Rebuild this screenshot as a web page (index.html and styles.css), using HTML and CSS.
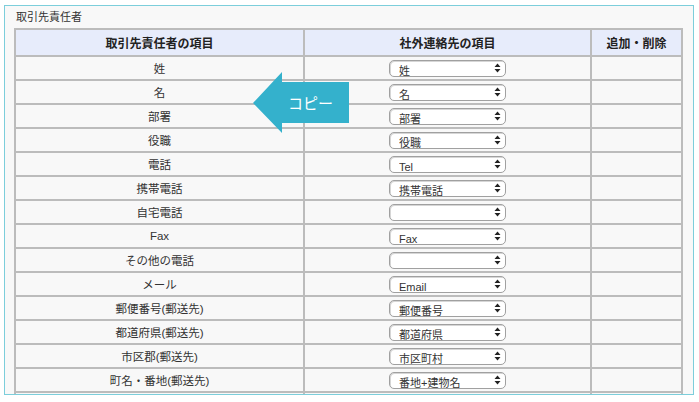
FILE: index.html
```html
<!DOCTYPE html>
<html lang="ja">
<head>
    <meta charset="UTF-8">
    <title>取引先責任者</title>
    <link rel="stylesheet" href="styles.css">
</head>
<body>

    <!-- Mapping panel -->
    <div class="panel">
        <div class="panel-title">取引先責任者</div>

        <table class="map-table">
            <thead>
                <tr>
                    <th class="col-src">取引先責任者の項目</th>
                    <th class="col-dst">社外連絡先の項目</th>
                    <th class="col-act">追加・削除</th>
                </tr>
            </thead>
            <tbody>
                <tr><td>姓</td><td><span class="pick"><select><option>姓</option></select><svg class="pick-arrows" width="7" height="10" viewBox="0 0 7 10"><path d="M3.5 0.5L6.5 4H0.5Z M3.5 9.5L6.5 6H0.5Z" fill="#222"/></svg></span></td><td></td></tr>
                <tr><td>名</td><td><span class="pick"><select><option>名</option></select><svg class="pick-arrows" width="7" height="10" viewBox="0 0 7 10"><path d="M3.5 0.5L6.5 4H0.5Z M3.5 9.5L6.5 6H0.5Z" fill="#222"/></svg></span></td><td></td></tr>
                <tr><td>部署</td><td><span class="pick"><select><option>部署</option></select><svg class="pick-arrows" width="7" height="10" viewBox="0 0 7 10"><path d="M3.5 0.5L6.5 4H0.5Z M3.5 9.5L6.5 6H0.5Z" fill="#222"/></svg></span></td><td></td></tr>
                <tr><td>役職</td><td><span class="pick"><select><option>役職</option></select><svg class="pick-arrows" width="7" height="10" viewBox="0 0 7 10"><path d="M3.5 0.5L6.5 4H0.5Z M3.5 9.5L6.5 6H0.5Z" fill="#222"/></svg></span></td><td></td></tr>
                <tr><td>電話</td><td><span class="pick"><select><option>Tel</option></select><svg class="pick-arrows" width="7" height="10" viewBox="0 0 7 10"><path d="M3.5 0.5L6.5 4H0.5Z M3.5 9.5L6.5 6H0.5Z" fill="#222"/></svg></span></td><td></td></tr>
                <tr><td>携帯電話</td><td><span class="pick"><select><option>携帯電話</option></select><svg class="pick-arrows" width="7" height="10" viewBox="0 0 7 10"><path d="M3.5 0.5L6.5 4H0.5Z M3.5 9.5L6.5 6H0.5Z" fill="#222"/></svg></span></td><td></td></tr>
                <tr><td>自宅電話</td><td><span class="pick"><select><option></option></select><svg class="pick-arrows" width="7" height="10" viewBox="0 0 7 10"><path d="M3.5 0.5L6.5 4H0.5Z M3.5 9.5L6.5 6H0.5Z" fill="#222"/></svg></span></td><td></td></tr>
                <tr><td>Fax</td><td><span class="pick"><select><option>Fax</option></select><svg class="pick-arrows" width="7" height="10" viewBox="0 0 7 10"><path d="M3.5 0.5L6.5 4H0.5Z M3.5 9.5L6.5 6H0.5Z" fill="#222"/></svg></span></td><td></td></tr>
                <tr><td>その他の電話</td><td><span class="pick"><select><option></option></select><svg class="pick-arrows" width="7" height="10" viewBox="0 0 7 10"><path d="M3.5 0.5L6.5 4H0.5Z M3.5 9.5L6.5 6H0.5Z" fill="#222"/></svg></span></td><td></td></tr>
                <tr><td>メール</td><td><span class="pick"><select><option>Email</option></select><svg class="pick-arrows" width="7" height="10" viewBox="0 0 7 10"><path d="M3.5 0.5L6.5 4H0.5Z M3.5 9.5L6.5 6H0.5Z" fill="#222"/></svg></span></td><td></td></tr>
                <tr><td>郵便番号(郵送先)</td><td><span class="pick"><select><option>郵便番号</option></select><svg class="pick-arrows" width="7" height="10" viewBox="0 0 7 10"><path d="M3.5 0.5L6.5 4H0.5Z M3.5 9.5L6.5 6H0.5Z" fill="#222"/></svg></span></td><td></td></tr>
                <tr><td>都道府県(郵送先)</td><td><span class="pick"><select><option>都道府県</option></select><svg class="pick-arrows" width="7" height="10" viewBox="0 0 7 10"><path d="M3.5 0.5L6.5 4H0.5Z M3.5 9.5L6.5 6H0.5Z" fill="#222"/></svg></span></td><td></td></tr>
                <tr><td>市区郡(郵送先)</td><td><span class="pick"><select><option>市区町村</option></select><svg class="pick-arrows" width="7" height="10" viewBox="0 0 7 10"><path d="M3.5 0.5L6.5 4H0.5Z M3.5 9.5L6.5 6H0.5Z" fill="#222"/></svg></span></td><td></td></tr>
                <tr><td>町名・番地(郵送先)</td><td><span class="pick"><select><option>番地+建物名</option></select><svg class="pick-arrows" width="7" height="10" viewBox="0 0 7 10"><path d="M3.5 0.5L6.5 4H0.5Z M3.5 9.5L6.5 6H0.5Z" fill="#222"/></svg></span></td><td></td></tr>
                <!-- continues below the panel's edge -->
                <tr><td></td><td></td><td></td></tr>
            </tbody>
        </table>

        <!-- Copy arrow callout -->
        <svg class="copy-arrow" width="97" height="62" viewBox="0 0 97 62">
            <polygon points="0,31 29,0 29,10 96,10 96,51 29,51 29,61" fill="#34b1cc"/>
            <text x="35" y="36.5" fill="#fff" font-size="15" font-family="Noto Sans CJK JP, sans-serif">コピー</text>
        </svg>
    </div>

</body>
</html>
```

FILE: styles.css
```css
body {
    margin: 0;
    background-color: #fff;
    font-family: "Liberation Sans", "Noto Sans CJK JP", sans-serif;
    color: #333;
}
.panel {
    position: relative;
    margin: 5px 0 0 4px;
    width: 688px;
    height: 388px;
    border: 1px solid #7ccedb;
    background-color: #f8f8f8;
    overflow: hidden;
}
.panel-title {
    height: 22px;
    padding-left: 11px;
    font-size: 11px;
    line-height: 22px;
    color: #333;
}
.map-table {
    margin-left: 9px;
    width: 669px;
    border-collapse: collapse;
    border: 2px solid #a8a8a8;
    border-left-color: #8c8c8c;
    font-size: 11.5px;
}
.map-table th,
.map-table td {
    border: 2px solid #bcbcbc;
    padding: 0;
    text-align: center;
}
.map-table th {
    height: 25px;
    background-color: #e7ecfb;
    font-weight: bold;
    color: #222;
    font-size: 12px;
}
.map-table td {
    height: 22px;
}
.col-src {
    width: 287px;
}
.col-dst {
    width: 285px;
}
.pick {
    position: relative;
    display: inline-block;
    vertical-align: middle;
}
.pick select {
    display: block;
    appearance: none;
    -webkit-appearance: none;
    width: 117px;
    height: 17px;
    border: 1px solid #a0a0a0;
    border-radius: 5px;
    background-color: #fff;
    box-shadow: inset 1px 1px 0 #d6d6d6;
    padding: 4px 0 0 9px;
    font-family: "Liberation Sans", "Noto Sans CJK JP", sans-serif;
    font-size: 11px;
    line-height: 13px;
    color: #333;
}
.pick-arrows {
    position: absolute;
    right: 5px;
    top: 3px;
}
.copy-arrow {
    position: absolute;
    left: 248px;
    top: 66px;
}
```
